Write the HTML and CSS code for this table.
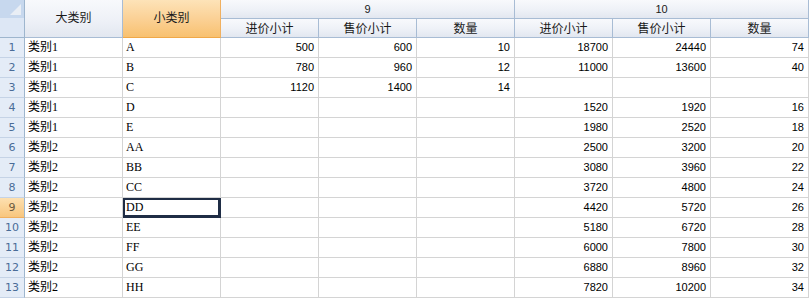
FILE: index.html
```html
<!DOCTYPE html>
<html lang="zh">
<head>
<meta charset="utf-8">
<title>Grid</title>
<link rel="stylesheet" href="styles.css">
</head>
<body>
<div class="sheet">
  <div class="corner"><span class="tri"></span></div>
  <div class="hd span2">大类别</div>
  <div class="hd span2 hsel">小类别</div>
  <div class="hd grp g1">9</div>
  <div class="hd grp g2">10</div>
  <div class="hd sub">进价小计</div>
  <div class="hd sub">售价小计</div>
  <div class="hd sub">数量</div>
  <div class="hd sub">进价小计</div>
  <div class="hd sub">售价小计</div>
  <div class="hd sub">数量</div>

  <div class="rh">1</div><div class="c t">类别1</div><div class="c t">A</div><div class="c n">500</div><div class="c n">600</div><div class="c n">10</div><div class="c n">18700</div><div class="c n">24440</div><div class="c n">74</div>
  <div class="rh">2</div><div class="c t">类别1</div><div class="c t">B</div><div class="c n">780</div><div class="c n">960</div><div class="c n">12</div><div class="c n">11000</div><div class="c n">13600</div><div class="c n">40</div>
  <div class="rh">3</div><div class="c t">类别1</div><div class="c t">C</div><div class="c n">1120</div><div class="c n">1400</div><div class="c n">14</div><div class="c n"></div><div class="c n"></div><div class="c n"></div>
  <div class="rh">4</div><div class="c t">类别1</div><div class="c t">D</div><div class="c n"></div><div class="c n"></div><div class="c n"></div><div class="c n">1520</div><div class="c n">1920</div><div class="c n">16</div>
  <div class="rh">5</div><div class="c t">类别1</div><div class="c t">E</div><div class="c n"></div><div class="c n"></div><div class="c n"></div><div class="c n">1980</div><div class="c n">2520</div><div class="c n">18</div>
  <div class="rh">6</div><div class="c t">类别2</div><div class="c t">AA</div><div class="c n"></div><div class="c n"></div><div class="c n"></div><div class="c n">2500</div><div class="c n">3200</div><div class="c n">20</div>
  <div class="rh">7</div><div class="c t">类别2</div><div class="c t">BB</div><div class="c n"></div><div class="c n"></div><div class="c n"></div><div class="c n">3080</div><div class="c n">3960</div><div class="c n">22</div>
  <div class="rh">8</div><div class="c t">类别2</div><div class="c t">CC</div><div class="c n"></div><div class="c n"></div><div class="c n"></div><div class="c n">3720</div><div class="c n">4800</div><div class="c n">24</div>
  <div class="rh rsel">9</div><div class="c t">类别2</div><div class="c t sel">DD</div><div class="c n"></div><div class="c n"></div><div class="c n"></div><div class="c n">4420</div><div class="c n">5720</div><div class="c n">26</div>
  <div class="rh">10</div><div class="c t">类别2</div><div class="c t">EE</div><div class="c n"></div><div class="c n"></div><div class="c n"></div><div class="c n">5180</div><div class="c n">6720</div><div class="c n">28</div>
  <div class="rh">11</div><div class="c t">类别2</div><div class="c t">FF</div><div class="c n"></div><div class="c n"></div><div class="c n"></div><div class="c n">6000</div><div class="c n">7800</div><div class="c n">30</div>
  <div class="rh">12</div><div class="c t">类别2</div><div class="c t">GG</div><div class="c n"></div><div class="c n"></div><div class="c n"></div><div class="c n">6880</div><div class="c n">8960</div><div class="c n">32</div>
  <div class="rh">13</div><div class="c t">类别2</div><div class="c t">HH</div><div class="c n"></div><div class="c n"></div><div class="c n"></div><div class="c n">7820</div><div class="c n">10200</div><div class="c n">34</div>
</div>
</body>
</html>
```

FILE: styles.css
```css
html, body {
  margin: 0;
  padding: 0;
  background: #ffffff;
}

.sheet {
  display: grid;
  grid-template-columns: 25px repeat(8, 98px);
  grid-template-rows: 19px 19px repeat(13, 20px);
  width: 809px;
  font-family: "Liberation Sans", "Noto Sans CJK SC", sans-serif;
  font-size: 12px;
  color: #000;
}

.sheet > div {
  box-sizing: border-box;
  overflow: hidden;
  white-space: nowrap;
}

.corner {
  grid-row: 1 / 3;
  grid-column: 1;
  position: relative;
  background: linear-gradient(#c7d8ee 0, #c7d8ee 19px, #dde7f5 19px, #dde7f5 100%);
  border-right: 1px solid #9eb6ce;
  border-bottom: 1px solid #9eb6ce;
  box-shadow: inset 0 -19px 0 0 #dde7f5;
}

.tri {
  position: absolute;
  right: 3px;
  top: 4px;
  width: 0;
  height: 0;
  border-left: 11px solid transparent;
  border-bottom: 11px solid #e9eef5;
}

.hd {
  display: flex;
  align-items: center;
  justify-content: center;
  background: linear-gradient(#f8f9fc 0%, #eef1f7 55%, #e2e7f0 100%);
  border-right: 1px solid #a8bcd4;
  border-bottom: 1px solid #a8bcd4;
  font-family: "Noto Sans CJK SC", sans-serif;
  font-size: 12px;
  color: #1a1a1a;
  line-height: 1;
}

.span2 {
  grid-row: 1 / 3;
  padding-bottom: 3px;
}

.hsel {
  background: linear-gradient(#fde3b8 0%, #fbd196 50%, #f8c170 100%);
  border-right: 1px solid #f0b060;
  border-bottom: 1px solid #f0a848;
}

.grp {
  font-family: "Liberation Sans", sans-serif;
  font-size: 11px;
}

.g1 { grid-column: 4 / 7; }
.g2 { grid-column: 7 / 10; }

.rh {
  display: flex;
  align-items: center;
  justify-content: center;
  background: #e4ecf7;
  border-right: 1px solid #9eb6ce;
  border-bottom: 1px solid #c5d3e6;
  font-family: "DejaVu Sans", sans-serif;
  font-size: 11px;
  color: #4a6c98;
}

.rsel {
  background: linear-gradient(#fde0b0, #f8c67e);
  border-bottom: 1px solid #f0b060;
  color: #6a5a40;
}

.c {
  display: flex;
  align-items: center;
  border-right: 1px solid #d4d4d4;
  border-bottom: 1px solid #d4d4d4;
  padding: 0 3px 1px 3px;
  line-height: 1;
}

.t {
  font-family: "Liberation Serif", "Noto Sans CJK SC", serif;
  font-size: 12px;
}

.n {
  justify-content: flex-end;
  font-family: "Liberation Sans", sans-serif;
  font-size: 11px;
  padding-right: 4px;
}

.sel {
  box-shadow: inset 0 0 0 2px #1f2d45;
  border-right-color: #1f2d45;
  border-bottom-color: #1f2d45;
}
```
